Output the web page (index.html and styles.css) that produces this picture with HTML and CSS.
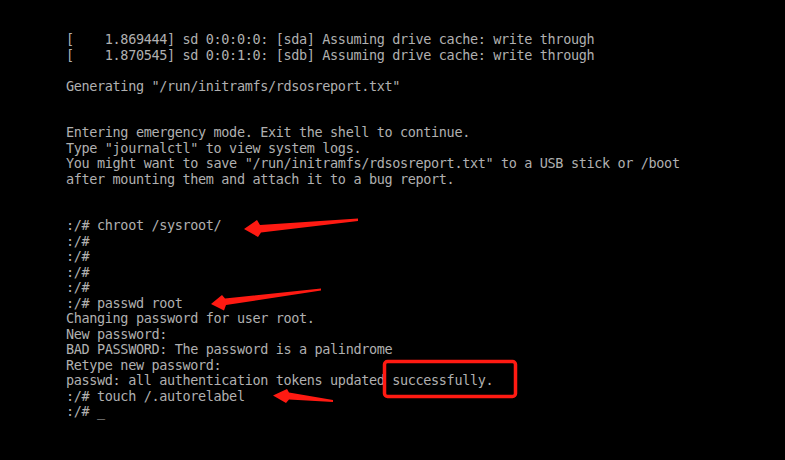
FILE: index.html
```html
<!DOCTYPE html>
<html>
<head>
<meta charset="utf-8">
<link rel="stylesheet" href="styles.css">
</head>
<body>
<div class="screen">
<pre class="console">[    1.869444] sd 0:0:0:0: [sda] Assuming drive cache: write through
[    1.870545] sd 0:0:1:0: [sdb] Assuming drive cache: write through

Generating "/run/initramfs/rdsosreport.txt"


Entering emergency mode. Exit the shell to continue.
Type "journalctl" to view system logs.
You might want to save "/run/initramfs/rdsosreport.txt" to a USB stick or /boot
after mounting them and attach it to a bug report.


:/# chroot /sysroot/
:/#
:/#
:/#
:/#
:/# passwd root
Changing password for user root.
New password:
BAD PASSWORD: The password is a palindrome
Retype new password:
passwd: all authentication tokens updated successfully.
:/# touch /.autorelabel
:/# _</pre>
<svg class="marks" width="785" height="460" viewBox="0 0 785 460" xmlns="http://www.w3.org/2000/svg">
  <g fill="#ff1a12">
    <polygon points="244,229 257,220 260,225 358,218.5 358,221 261,232.5 258,237"/>
    <polygon points="211,304 222,295 225,298.5 321,288.5 321,290.5 226,305 224,310.5"/>
    <polygon points="273,395.5 287,389 289,392.5 333,400 333,402 289,399.5 286,403"/>
  </g>
  <rect x="384.5" y="361.5" width="131" height="35" rx="3" ry="3" fill="none" stroke="#ff1a12" stroke-width="3.5"/>
</svg>
</div>
</body>
</html>
```
FILE: styles.css
```css
html, body {
  margin: 0;
  padding: 0;
  background: #000;
}
.screen {
  position: relative;
  width: 785px;
  height: 460px;
  overflow: hidden;
  background: #000;
}
.console {
  margin: 0;
  padding: 32px 0 0 66px;
  font-family: "DejaVu Sans Mono", "Liberation Mono", monospace;
  font-size: 13.5px;
  letter-spacing: -0.36px;
  line-height: 15.5px;
  color: #b0b0b0;
  white-space: pre;
}
.marks {
  position: absolute;
  left: 0;
  top: 0;
}
```
